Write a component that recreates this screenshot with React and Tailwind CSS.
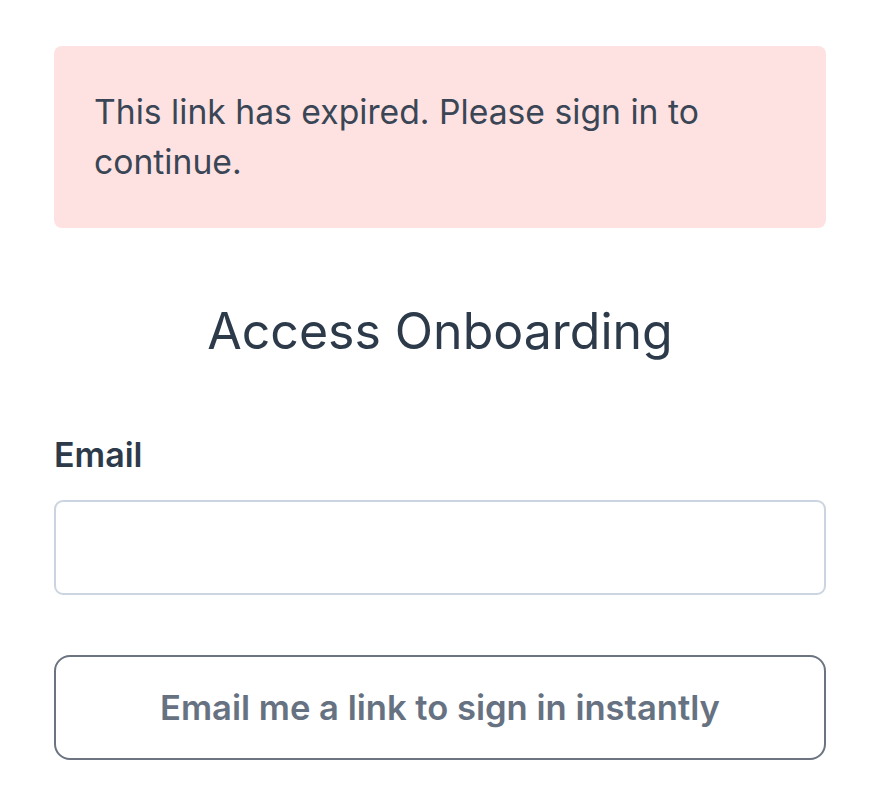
export default function App() {
  return (
    <div className="w-[880px] h-[788px] bg-white" style={{ fontFamily: "Inter, 'Noto Sans', sans-serif" }}>
      <div className="px-[54px] pt-[46px] flex flex-col">
        <div className="bg-[#fee2e2] rounded-[8px] px-[40px] py-[41px] text-[33.7px] leading-[50px] text-[#3a4655]">
          This link has expired. Please sign in to continue.
        </div>
        <h1 className="mt-[71px] text-center text-[50px] leading-[64px] text-[#2d3a4a] font-normal">Access Onboarding</h1>
        <label className="mt-[72px] text-[34px] leading-[40px] font-semibold text-[#2d3a4a]">Email</label>
        <input type="email" className="mt-[25px] h-[95px] border-2 border-[#cbd5e1] rounded-[9px] bg-white outline-none" />
        <button className="mt-[60px] h-[105px] border-2 border-[#6b7480] rounded-[16px] bg-white text-[34.6px] font-semibold text-[#667281]">
          Email me a link to sign in instantly
        </button>
      </div>
    </div>
  );
}
